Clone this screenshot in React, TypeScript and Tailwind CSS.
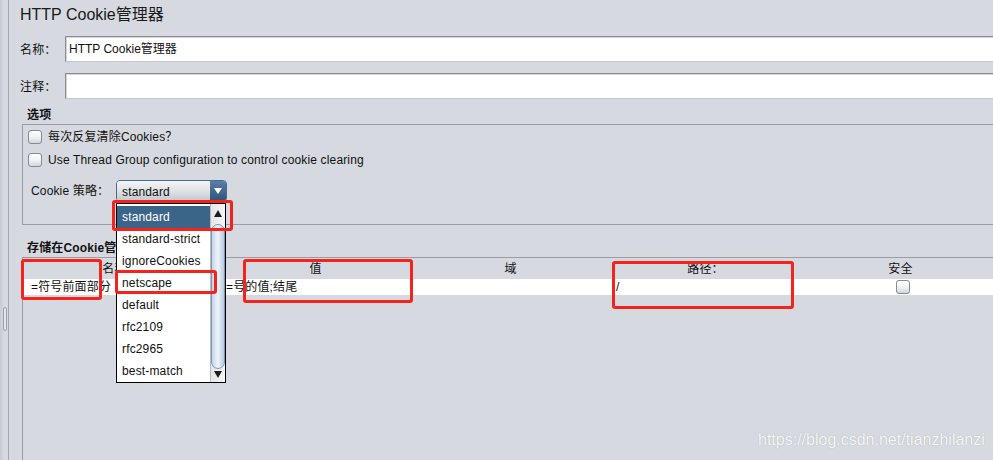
import React from 'react';

function CheckBox() {
  return (
    <div className="w-[14px] h-[14px] shrink-0 rounded-[3px] border border-[#868a91] bg-gradient-to-b from-[#ffffff] via-[#f2f3f5] to-[#d3d6db]" />
  );
}

function RedBox({ l, t, w, h }: { l: number; t: number; w: number; h: number }) {
  return (
    <div
      className="absolute border-[3px] border-[#f4231b] rounded-[3px] pointer-events-none"
      style={{ left: l, top: t, width: w, height: h }}
    />
  );
}

export default function App() {
  const items = ['standard', 'standard-strict', 'ignoreCookies', 'netscape', 'default', 'rfc2109', 'rfc2965', 'best-match'];
  return (
    <div className="relative w-[993px] h-[460px] overflow-hidden bg-[#d6d9e0] flex text-[12px] tracking-[0.15px] text-[#111] font-['Liberation_Sans','Noto_Sans_CJK_SC',sans-serif]">
      {/* left splitter strip */}
      <div className="relative w-[9px] shrink-0 border-r border-[#a3a7ae] bg-gradient-to-r from-[#c6cad1] via-[#d6d9e0] to-[#d6d9e0]">
        <div className="absolute left-[3px] top-[307px] w-[4px] h-[24px] rounded-[2px] border border-[#9ca0a7] bg-[#e3e5e9]" />
      </div>

      <div className="flex-1 min-w-0 flex flex-col pl-[11px]">
        <div className="h-[36px] pt-[5px] text-[16px] leading-[20px] tracking-normal text-[#1a1a1a]">HTTP Cookie管理器</div>

        <div className="h-[26px] flex items-center">
          <div className="w-[45px] shrink-0 pt-[2px]">名称：</div>
          <div className="flex-1 h-full bg-white border-t border-l border-[#8a8d93] border-b border-b-[#c3c6cb] flex items-center pl-[3px] shadow-[inset_1px_1px_0_#d3d5d9] tracking-normal">
            HTTP Cookie管理器
          </div>
        </div>

        <div className="h-[26px] mt-[11px] flex items-center">
          <div className="w-[45px] shrink-0 pt-[2px]">注释：</div>
          <div className="flex-1 h-full bg-white border-t border-l border-[#8a8d93] border-b border-b-[#c3c6cb] shadow-[inset_1px_1px_0_#d3d5d9]" />
        </div>

        <div className="h-[25px] pt-[9px] pl-[7px] leading-[14px] font-bold">选项</div>

        <div className="ml-[2px] h-[101px] border-t border-l border-b border-[#9a9da3] pl-[5px]">
          <div className="mt-[5px] h-[14px] flex items-center gap-[6px]">
            <CheckBox />
            <span>每次反复清除Cookies？</span>
          </div>
          <div className="mt-[9px] h-[14px] flex items-center gap-[6px]">
            <CheckBox />
            <span>Use Thread Group configuration to control cookie clearing</span>
          </div>
          <div className="mt-[13px] h-[22px] flex items-center">
            <div className="w-[85px] ml-[3px] shrink-0">Cookie 策略：</div>
            <div className="w-[111px] h-[22px] flex rounded-[4px] border border-[#4a6a8e] overflow-hidden">
              <div className="flex-1 flex items-center pl-[5px] pt-[1px] bg-gradient-to-b from-[#f3f4f6] via-[#dfe2e6] to-[#c2c6cd]">standard</div>
              <div className="w-[16px] flex items-center justify-center bg-gradient-to-b from-[#5b7ea4] to-[#2e547b]">
                <svg width="8" height="6" viewBox="0 0 8 6"><path d="M0 0 L8 0 L4 6 Z" fill="#fff" /></svg>
              </div>
            </div>
          </div>
        </div>

        <div className="h-[32px] pt-[16px] pl-[7px] leading-[14px] font-bold">存储在Cookie管理器中的Cookie</div>

        <div className="ml-[2px] flex-1 border-t border-l border-[#9a9da3] overflow-hidden">
          <div className="h-[21px] grid grid-cols-[195px_195px_195px_195px_195px] items-center text-center">
            <div>名称：</div>
            <div>值</div>
            <div>域</div>
            <div>路径：</div>
            <div>安全</div>
          </div>
          <div className="h-[16px] bg-white grid grid-cols-[195px_195px_195px_195px_195px] items-center leading-[16px]">
            <div className="pl-[8px]">=符号前面部分</div>
            <div className="pl-[8px]">=号的值;结尾</div>
            <div />
            <div className="pl-[8px]">/</div>
            <div className="flex justify-center pl-[4px]"><CheckBox /></div>
          </div>
        </div>
      </div>

      {/* dropdown popup */}
      <div className="absolute left-[116px] top-[203px] w-[110px] h-[180px] border border-black bg-white">
        <div className="pt-[2px] w-[93px]">
          {items.map((it, i) => (
            <div
              key={it}
              className={
                i === 0
                  ? 'h-[22px] flex items-center pl-[5px] bg-[#3b6588] text-white'
                  : 'h-[22px] flex items-center pl-[5px] text-[#111]'
              }
            >
              {it}
            </div>
          ))}
        </div>
        <div className="absolute right-0 top-0 bottom-0 w-[15px] bg-gradient-to-r from-[#e4e6ea] to-[#f4f5f7] border-l border-[#b9bcc2]">
          <div className="h-[18px] flex items-center justify-center">
            <svg width="8" height="7" viewBox="0 0 8 7"><path d="M4 0 L8 7 L0 7 Z" fill="#1e1e1e" /></svg>
          </div>
          <div className="absolute left-[0px] top-[20px] w-[14px] h-[145px] rounded-[7px] border border-[#7d97b3] bg-gradient-to-r from-[#c3d6e9] via-[#eef4fa] to-[#b6cbe0]" />
          <div className="absolute bottom-[3px] left-0 right-0 h-[10px] flex items-center justify-center">
            <svg width="8" height="7" viewBox="0 0 8 7"><path d="M0 0 L8 0 L4 7 Z" fill="#1e1e1e" /></svg>
          </div>
        </div>
      </div>

      {/* red annotation boxes */}
      <RedBox l={112} t={200} w={121} h={31} />
      <RedBox l={115} t={270} w={102} h={24} />
      <RedBox l={21} t={259} w={81} h={41} />
      <RedBox l={243} t={259} w={170} h={44} />
      <RedBox l={612} t={261} w={182} h={48} />

      {/* watermark */}
      <div className="absolute left-[758px] top-[431px] text-[16px] leading-[18px] tracking-normal text-[#f5f6f8] [text-shadow:0_0_1px_rgba(110,110,110,0.45)]">
        https://blog.csdn.net/tianzhilanzi
      </div>
    </div>
  );
}
